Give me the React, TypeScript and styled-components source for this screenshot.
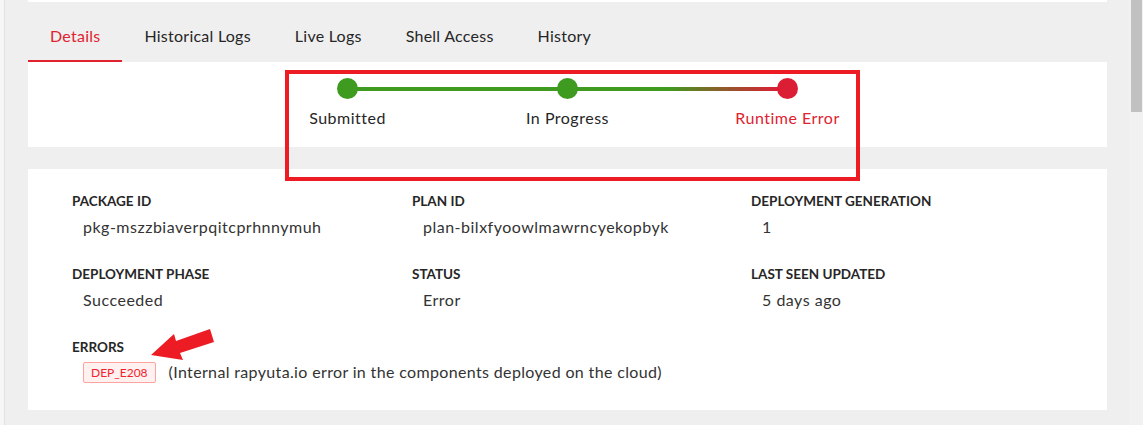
import { createGlobalStyle, styled } from "styled-components";

const GlobalStyle = createGlobalStyle`
  html, body {
    margin: 0;
    height: 100%;
    overflow: hidden;
    background: #efefef;
    font-family: Lato, "Liberation Sans", sans-serif;
    color: #262626;
  }
  #root {
    height: 100%;
  }
`;

type Step = { label: string; error?: boolean };
type Field = { label: string; value: string };

const steps: Step[] = [
  { label: "Submitted" },
  { label: "In Progress" },
  { label: "Runtime Error", error: true },
];

const tabs = ["Details", "Historical Logs", "Live Logs", "Shell Access", "History"];

const fields: Field[] = [
  { label: "Package ID", value: "pkg-mszzbiaverpqitcprhnnymuh" },
  { label: "Plan ID", value: "plan-bilxfyoowlmawrncyekopbyk" },
  { label: "Deployment Generation", value: "1" },
  { label: "Deployment Phase", value: "Succeeded" },
  { label: "Status", value: "Error" },
  { label: "Last Seen Updated", value: "5 days ago" },
];

function App() {
  return (
    <>
      <GlobalStyle />
      <Page>
        <LeftStrip />
        <Main>
          <TopCardEdge />
          <TabBar>
            {tabs.map((t, i) => (
              <Tab key={t} $active={i === 0}>
                {t}
              </Tab>
            ))}
          </TabBar>
          <Content>
            <StatusCard>
              <Track>
                <Dot />
                <Line />
                <Dot />
                <Line $fade />
                <Dot $error />
              </Track>
              <StepLabels>
                {steps.map((s) => (
                  <StepLabel key={s.label} $error={s.error}>
                    {s.label}
                  </StepLabel>
                ))}
              </StepLabels>
            </StatusCard>
            <InfoCard>
              <FieldGrid>
                {fields.map((f) => (
                  <div key={f.label}>
                    <FieldLabel>{f.label}</FieldLabel>
                    <FieldValue>{f.value}</FieldValue>
                  </div>
                ))}
              </FieldGrid>
              <FieldLabel>Errors</FieldLabel>
              <ErrorRow>
                <ErrorTag>DEP_E208</ErrorTag>
                <span>(Internal rapyuta.io error in the components deployed on the cloud)</span>
              </ErrorRow>
              <Arrow width="105" height="45" viewBox="0 0 105 45">
                <polygon
                  points="8,31 31,10 33,17 67,5 71,18 37,29 40,36"
                  fill="#ed1c24"
                />
              </Arrow>
            </InfoCard>
            {/* annotation frame drawn over both cards */}
            <HighlightBox />
          </Content>
        </Main>
        <Scrollbar>
          <Thumb />
        </Scrollbar>
      </Page>
    </>
  );
}

export default App;

const Page = styled.div`
  display: flex;
  height: 100%;
`;

const LeftStrip = styled.div`
  width: 4px;
  background: #f6f6f6;
  border-right: 1px solid #e2e2e2;
`;

const Main = styled.div`
  flex: 1;
  padding: 0 22px 0 23px;
`;

const TopCardEdge = styled.div`
  height: 2px;
  background: #ffffff;
`;

const TabBar = styled.div`
  display: flex;
  margin-top: 12px;
`;

const Tab = styled.div<{ $active?: boolean }>`
  padding: 11px 22px 13px;
  line-height: 22px;
  font-size: 16px;
  letter-spacing: 0.25px;
  color: ${(p) => (p.$active ? "#e0222f" : "#262626")};
  border-bottom: 2px solid ${(p) => (p.$active ? "#e0222f" : "transparent")};
`;

const Content = styled.div`
  position: relative;
`;

const StatusCard = styled.div`
  background: #ffffff;
  height: 85px;
  padding-top: 16px;
  box-sizing: border-box;
  display: flex;
  flex-direction: column;
  align-items: center;
`;

const Track = styled.div`
  display: flex;
  align-items: center;
  width: 461px;
`;

const Dot = styled.div<{ $error?: boolean }>`
  width: 21px;
  height: 21px;
  border-radius: 50%;
  flex-shrink: 0;
  background: ${(p) => (p.$error ? "#dc1e35" : "#3f9a20")};
`;

const Line = styled.div<{ $fade?: boolean }>`
  flex: 1;
  height: 4px;
  margin: 0 -1px;
  background: ${(p) =>
    p.$fade
      ? "linear-gradient(90deg, #3f9a20 0%, #3f9a20 45%, #dc1e35 100%)"
      : "#3f9a20"};
`;

const StepLabels = styled.div`
  display: grid;
  grid-template-columns: repeat(3, 220px);
  margin-top: 8px;
`;

const StepLabel = styled.div<{ $error?: boolean }>`
  text-align: center;
  font-size: 16px;
  line-height: 22px;
  letter-spacing: 0.5px;
  color: ${(p) => (p.$error ? "#e0222f" : "#262626")};
`;

const HighlightBox = styled.div`
  position: absolute;
  z-index: 2;
  left: 257px;
  top: 8px;
  width: 575px;
  height: 111px;
  box-sizing: border-box;
  border: 4px solid #ed1c24;
  pointer-events: none;
`;

const InfoCard = styled.div`
  position: relative;
  margin-top: 22px;
  background: #ffffff;
  padding: 22px 44px 27px;
`;

const FieldGrid = styled.div`
  display: grid;
  grid-template-columns: 340px 339px 1fr;
  row-gap: 26px;
  margin-bottom: 26px;
`;

const FieldLabel = styled.div`
  font-size: 13.5px;
  line-height: 20px;
  font-weight: 700;
  text-transform: uppercase;
  color: #262626;
`;

const FieldValue = styled.div`
  margin-top: 5px;
  padding-left: 11px;
  font-size: 16px;
  line-height: 22px;
  letter-spacing: 0.5px;
  color: #333333;
`;

const ErrorRow = styled.div`
  display: flex;
  align-items: center;
  gap: 13px;
  margin-top: 4px;
  padding-left: 11px;
  font-size: 16px;
  line-height: 22px;
  letter-spacing: 0.35px;
  color: #333333;
`;

const ErrorTag = styled.span`
  display: inline-block;
  padding: 0 7px;
  line-height: 19px;
  font-size: 12px;
  letter-spacing: 0;
  color: #f5222d;
  background: #fff1f0;
  border: 1px solid #ffa39e;
  border-radius: 2px;
`;

const Arrow = styled.svg`
  position: absolute;
  left: 115px;
  top: 155px;
`;

const Scrollbar = styled.div`
  width: 14px;
  background: #f1f1f1;
  padding-left: 2px;
  box-sizing: border-box;
`;

const Thumb = styled.div`
  width: 11px;
  height: 112px;
  background: #c1c1c1;
`;
